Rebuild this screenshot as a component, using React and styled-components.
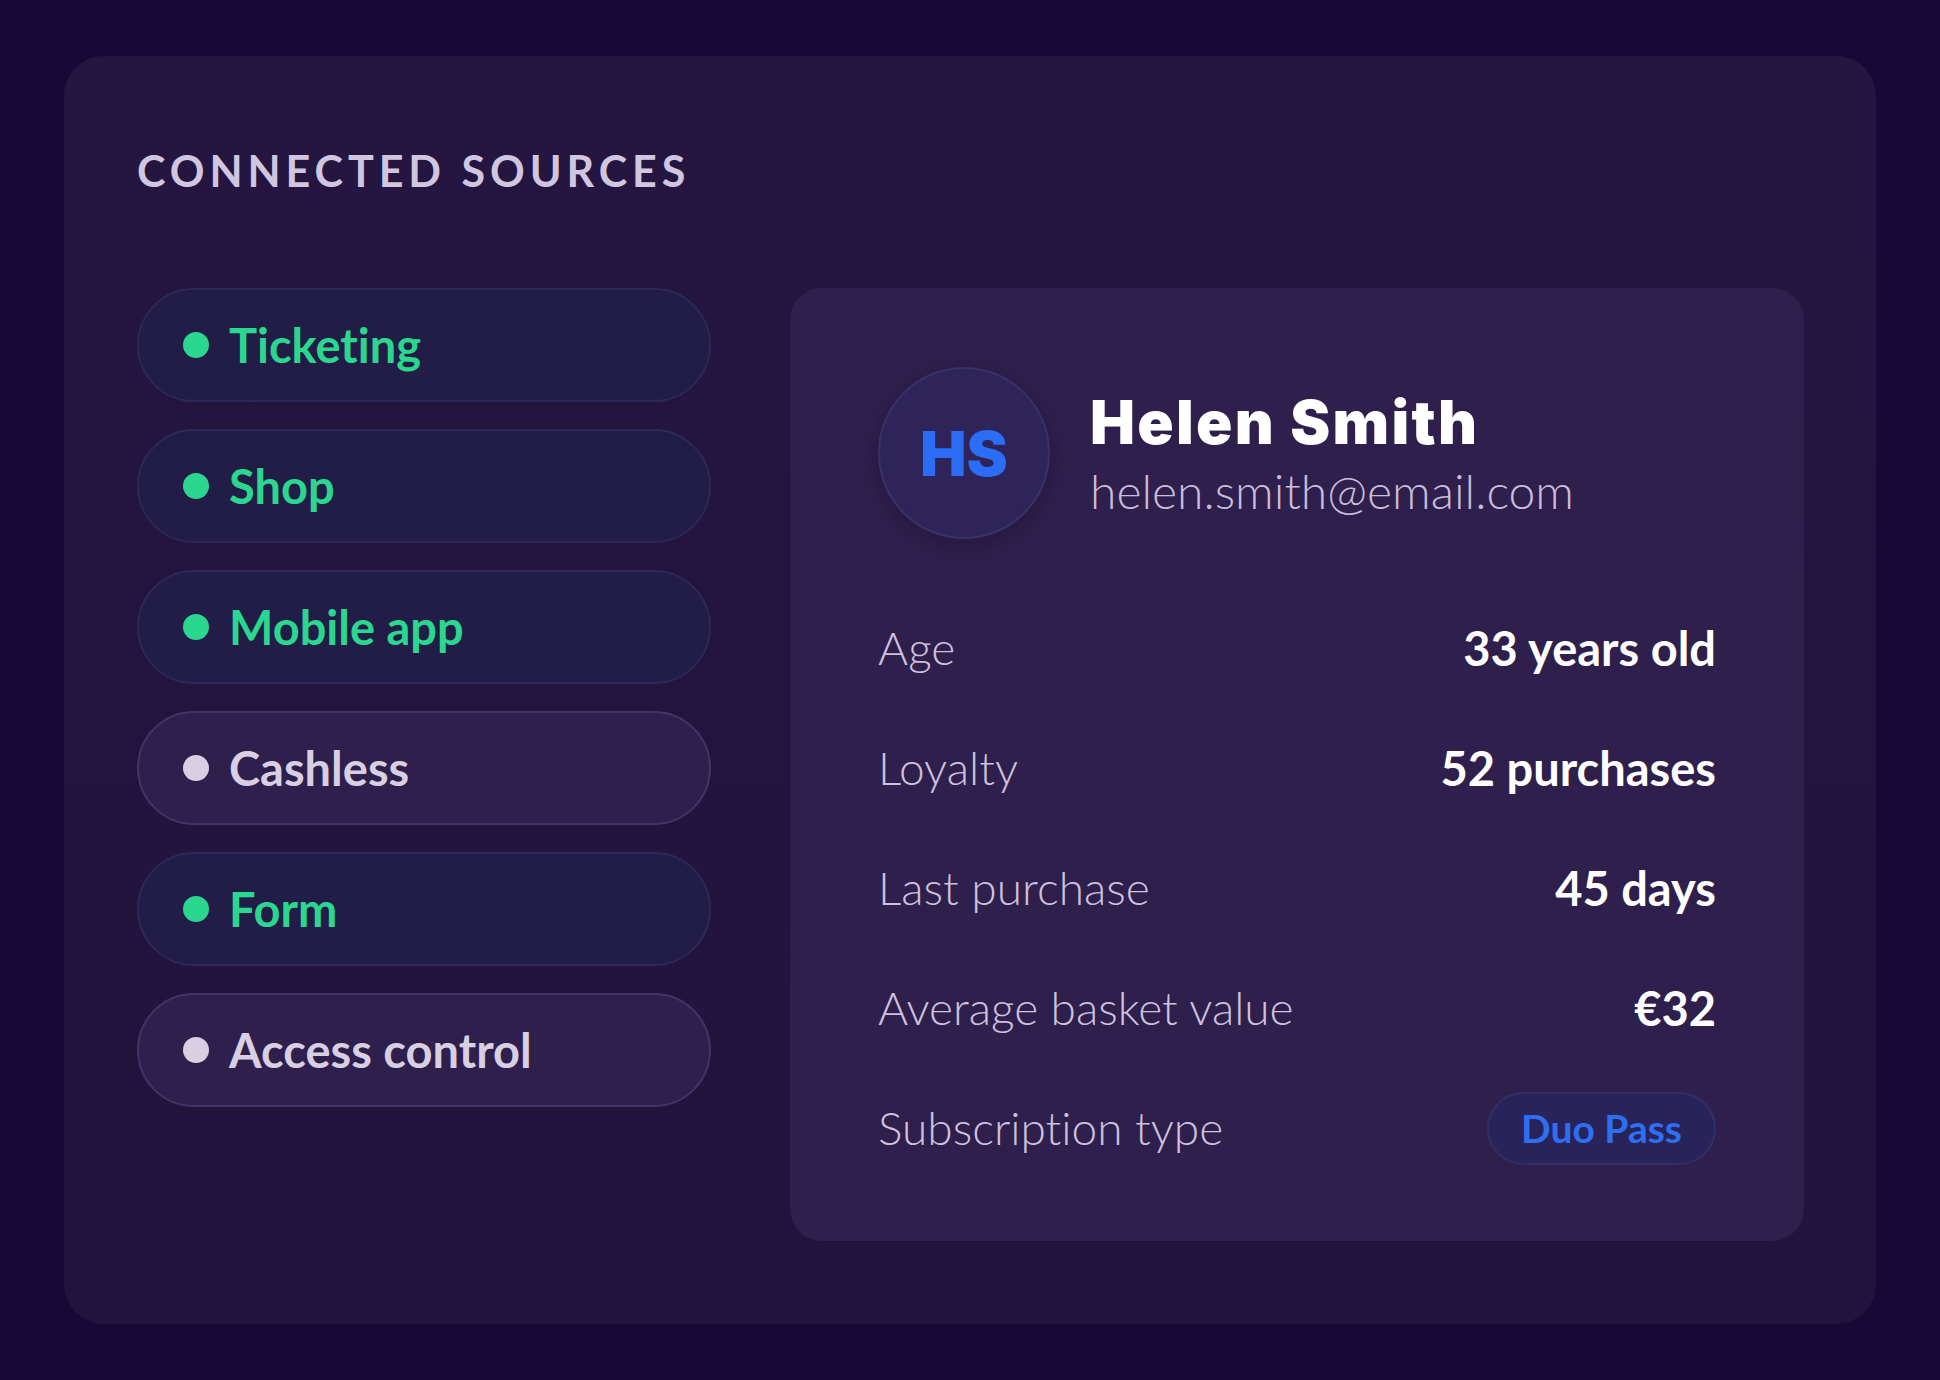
import React from 'react';
import styled, { createGlobalStyle } from 'styled-components';

const GlobalStyle = createGlobalStyle`
  * { box-sizing: border-box; }
  html, body {
    margin: 0;
    padding: 0;
    background: #170935;
  }
  body {
    font-family: 'Lato', 'Noto Sans', sans-serif;
    font-variant-ligatures: none;
    font-feature-settings: "liga" 0, "clig" 0;
  }
`;

const sources = [
  { name: 'Ticketing', active: true },
  { name: 'Shop', active: true },
  { name: 'Mobile app', active: true },
  { name: 'Cashless', active: false },
  { name: 'Form', active: true },
  { name: 'Access control', active: false },
];

const details = [
  { label: 'Age', value: '33 years old' },
  { label: 'Loyalty', value: '52 purchases' },
  { label: 'Last purchase', value: '45 days' },
  { label: 'Average basket value', value: '€32' },
];

const App = () => {
  return (
    <Page>
      <GlobalStyle />
      <Panel>
        <Heading>Connected sources</Heading>
        <Columns>
          <SourceList>
            {sources.map((s) => (
              <SourcePill key={s.name} $active={s.active}>
                <Dot $active={s.active} />
                <SourceName $active={s.active}>{s.name}</SourceName>
              </SourcePill>
            ))}
          </SourceList>

          <ProfileCard>
            <ProfileHeader>
              <Avatar>HS</Avatar>
              <Identity>
                <Name>Helen Smith</Name>
                <Email>helen.smith@email.com</Email>
              </Identity>
            </ProfileHeader>

            <Details>
              {details.map((d) => (
                <DetailRow key={d.label}>
                  <Label>{d.label}</Label>
                  <Value>{d.value}</Value>
                </DetailRow>
              ))}
              <DetailRow>
                <Label>Subscription type</Label>
                <Badge>Duo Pass</Badge>
              </DetailRow>
            </Details>
          </ProfileCard>
        </Columns>
      </Panel>
    </Page>
  );
};

const Page = styled.div`
  width: 1940px;
  min-height: 1380px;
  padding: 56px 64px;
  background: #170935;
`;

const Panel = styled.section`
  width: 1812px;
  padding: 93px 72px 83px 73px;
  border-radius: 40px;
  background: linear-gradient(180deg, #251641 0%, #22133d 100%);
`;

const Heading = styled.h2`
  margin: 0;
  font-family: 'Lato', sans-serif;
  font-size: 43px;
  line-height: 1;
  font-weight: 700;
  letter-spacing: 0.115em;
  text-transform: uppercase;
  color: #d1c6df;
`;

const Columns = styled.div`
  display: flex;
  align-items: flex-start;
  gap: 79px;
  margin-top: 96px;
`;

const SourceList = styled.div`
  display: flex;
  flex-direction: column;
  gap: 27px;
  width: 574px;
  flex-shrink: 0;
`;

const SourcePill = styled.div`
  display: flex;
  align-items: center;
  gap: 20px;
  height: 114px;
  padding: 0 44px;
  border-radius: 57px;
  border: 2px solid ${(p) => (p.$active ? '#2b2955' : '#433466')};
  background: ${(p) => (p.$active ? '#221d47' : '#2e1f4d')};
`;

const Dot = styled.span`
  width: 26px;
  height: 26px;
  border-radius: 50%;
  flex-shrink: 0;
  background: ${(p) => (p.$active ? '#2bd68f' : '#d8cfe2')};
`;

const SourceName = styled.span`
  font-family: 'Lato', sans-serif;
  font-size: 47px;
  font-weight: 700;
  line-height: 1;
  color: ${(p) => (p.$active ? '#2bd68f' : '#d8cfe2')};
`;

const ProfileCard = styled.div`
  width: 1014px;
  flex-shrink: 0;
  padding: 79px 88px 53px 88px;
  border-radius: 32px;
  background: #2e1f4c;
`;

const ProfileHeader = styled.div`
  display: flex;
  align-items: center;
  gap: 40px;
`;

const Avatar = styled.div`
  width: 172px;
  height: 172px;
  border-radius: 50%;
  flex-shrink: 0;
  display: flex;
  align-items: center;
  justify-content: center;
  background: #2e2459;
  border: 2px solid #383266;
  box-shadow: 0 6px 20px rgba(10, 4, 30, 0.25);
  font-family: 'Inter', sans-serif;
  font-size: 62px;
  font-weight: 900;
  color: #2b6df5;
`;

const Identity = styled.div`
  display: flex;
  flex-direction: column;
  padding-top: 4px;
`;

const Name = styled.div`
  font-family: 'Inter', sans-serif;
  font-size: 60px;
  line-height: 64px;
  font-weight: 900;
  letter-spacing: 2.3px;
  color: #ffffff;
`;

const Email = styled.div`
  margin-top: 8px;
  font-family: 'Lato', sans-serif;
  font-size: 48px;
  line-height: 1.2;
  font-weight: 300;
  color: #c9bdd9;
`;

const Details = styled.div`
  display: flex;
  flex-direction: column;
  margin-top: 49px;
`;

const DetailRow = styled.div`
  display: flex;
  align-items: center;
  justify-content: space-between;
  height: 120px;
`;

const Label = styled.span`
  font-family: 'Lato', sans-serif;
  font-size: 46px;
  line-height: 1.2;
  font-weight: 300;
  color: #cdc2dc;
`;

const Value = styled.span`
  font-family: 'Lato', sans-serif;
  font-size: 47px;
  line-height: 1.2;
  font-weight: 700;
  color: #ffffff;
`;

const Badge = styled.span`
  display: inline-flex;
  align-items: center;
  height: 73px;
  padding: 0 32px;
  border-radius: 37px;
  background: #28235a;
  border: 2px solid #332e64;
  font-family: 'Lato', sans-serif;
  font-size: 39px;
  font-weight: 700;
  color: #2e6ff2;
`;

export default App;
